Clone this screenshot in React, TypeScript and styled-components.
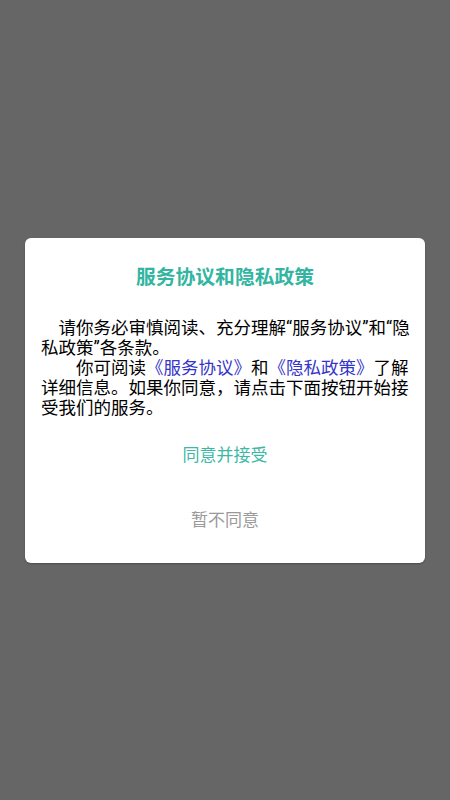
import React from "react";
import styled, { createGlobalStyle } from "styled-components";

const Global = createGlobalStyle`
  html, body { margin: 0; padding: 0; }
  body {
    background: #666666;
    font-family: Roboto, "Noto Sans CJK SC", sans-serif;
  }
`;

const Overlay = styled.div`
  width: 450px;
  height: 800px;
  background: #666666;
  display: flex;
  align-items: center;
  justify-content: center;
`;

const Dialog = styled.div`
  width: 400px;
  box-sizing: border-box;
  background: #ffffff;
  border-radius: 6px;
  box-shadow: 0 1px 2px rgba(0, 0, 0, 0.25);
  padding: 24px 0 12px;
  display: flex;
  flex-direction: column;
`;

const Title = styled.h2`
  margin: 0;
  height: 28px;
  line-height: 28px;
  text-align: center;
  font-family: "Noto Sans CJK SC", sans-serif;
  font-size: 19.8px;
  font-weight: 700;
  color: #33b5a1;
`;

const Body = styled.div`
  margin: 28px 16px 3px;
  font-size: 17.5px;
  line-height: 20px;
  font-weight: 400;
  color: #000000;
`;

const Para = styled.p<{ $indent: number }>`
  margin: 0;
  white-space: nowrap;
  text-indent: ${(p) => p.$indent}em;
`;

const Link = styled.span`
  color: #3535c8;
`;

const ActionButton = styled.button<{ $tone: "primary" | "muted" }>`
  height: 65px;
  border: none;
  background: transparent;
  padding: 0;
  font-family: "Noto Sans CJK SC", sans-serif;
  font-size: 17px;
  color: ${(p) => (p.$tone === "primary" ? "#3db8a6" : "#9a9a9a")};
  cursor: pointer;
`;

export default function App() {
  return (
    <>
      <Global />
      <Overlay>
        <Dialog>
          <Title>服务协议和隐私政策</Title>
          <Body>
            <Para $indent={1}>
              请你务必审慎阅读、充分理解“服务协议”和“隐
              <br />
              私政策”各条款。
            </Para>
            <Para $indent={2}>
              你可阅读<Link>《服务协议》</Link>和<Link>《隐私政策》</Link>了解
              <br />
              详细信息。如果你同意，请点击下面按钮开始接
              <br />
              受我们的服务。
            </Para>
          </Body>
          <ActionButton $tone="primary">同意并接受</ActionButton>
          <ActionButton $tone="muted">暂不同意</ActionButton>
        </Dialog>
      </Overlay>
    </>
  );
}
